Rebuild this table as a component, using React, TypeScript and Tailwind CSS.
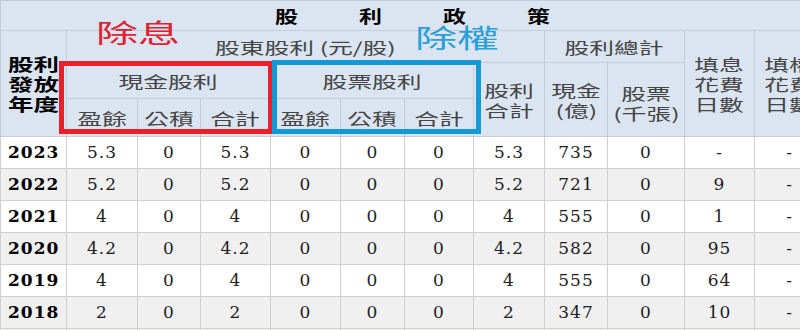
import type { ReactNode } from 'react'

interface DividendRow {
  year: string
  values: string[]
  bg: string
}

const rows: DividendRow[] = [
  { year: '2023', values: ['5.3', '0', '5.3', '0', '0', '0', '5.3', '735', '0', '-', '-'], bg: 'bg-white' },
  { year: '2022', values: ['5.2', '0', '5.2', '0', '0', '0', '5.2', '721', '0', '9', '-'], bg: 'bg-[#f0f0f0]' },
  { year: '2021', values: ['4', '0', '4', '0', '0', '0', '4', '555', '0', '1', '-'], bg: 'bg-white' },
  { year: '2020', values: ['4.2', '0', '4.2', '0', '0', '0', '4.2', '582', '0', '95', '-'], bg: 'bg-[#f0f0f0]' },
  { year: '2019', values: ['4', '0', '4', '0', '0', '0', '4', '555', '0', '64', '-'], bg: 'bg-white' },
  { year: '2018', values: ['2', '0', '2', '0', '0', '0', '2', '347', '0', '10', '-'], bg: 'bg-[#f0f0f0]' },
  { year: '', values: ['', '', '', '', '', '', '', '', '', '', ''], bg: 'bg-[#fcf4dc]' },
]

const colWidths = [66, 71, 63, 70, 70, 64, 69, 71, 63, 77, 70, 70]

const th = 'border border-[#c4ccd6] bg-[#dbe5f1] p-0 font-normal text-[#444444] text-[16px] leading-[20px] text-center align-middle'
const td = 'border border-[#cfcfcf] p-0 text-center align-middle text-[17px] tracking-[1px] text-[#1e1e1e]'

// text in the shot is stretched sideways, so widen the glyphs
function Wide({ children }: { children: ReactNode }) {
  return <span className="inline-block scale-x-[1.55] whitespace-nowrap">{children}</span>
}

function Lines({ lines }: { lines: string[] }) {
  return (
    <div className="flex flex-col items-center">
      {lines.map((l) => (
        <Wide key={l}>{l}</Wide>
      ))}
    </div>
  )
}

export default function App() {
  return (
    <div
      className="relative w-[800px] h-[330px] overflow-hidden bg-white"
      style={{ fontFamily: '"Noto Sans CJK TC", "Noto Sans", sans-serif' }}
    >
      <table className="table-fixed border-collapse w-[824px]">
        <colgroup>
          {colWidths.map((w, i) => (
            <col key={i} style={{ width: w }} />
          ))}
        </colgroup>
        <thead>
          <tr className="h-[30px]">
            <th colSpan={12} className={th}>
              <div className="flex justify-center gap-[67px] text-[17px] font-bold text-black">
                {['股', '利', '政', '策'].map((c) => (
                  <span key={c} className="inline-block scale-x-[1.35]">
                    {c}
                  </span>
                ))}
              </div>
            </th>
          </tr>
          <tr className="h-[32px]">
            <th rowSpan={3} className={th}>
              <div className="flex flex-col items-start pl-[7px] text-[17px] font-bold text-black leading-[20px]">
                {['股利', '發放', '年度'].map((l) => (
                  <span key={l} className="inline-block origin-left scale-x-[1.5]">
                    {l}
                  </span>
                ))}
              </div>
            </th>
            <th colSpan={7} className={th}>
              <Wide>股東股利 (元/股)</Wide>
            </th>
            <th colSpan={2} className={th}>
              <Wide>股利總計</Wide>
            </th>
            <th rowSpan={3} className={th}>
              <Lines lines={['填息', '花費', '日數']} />
            </th>
            <th rowSpan={3} className={th}>
              <Lines lines={['填權', '花費', '日數']} />
            </th>
          </tr>
          <tr className="h-[36px]">
            <th colSpan={3} className={th}>
              <Wide>現金股利</Wide>
            </th>
            <th colSpan={3} className={th}>
              <Wide>股票股利</Wide>
            </th>
            <th rowSpan={2} className={th}>
              <Lines lines={['股利', '合計']} />
            </th>
            <th rowSpan={2} className={th}>
              <Lines lines={['現金', '(億)']} />
            </th>
            <th rowSpan={2} className={th}>
              <div className="pt-[6px]">
                <Lines lines={['股票', '(千張)']} />
              </div>
            </th>
          </tr>
          <tr className="h-[38px]">
            {['盈餘', '公積', '合計', '盈餘', '公積', '合計'].map((t, i) => (
              <th key={i} className={th}>
                <Wide>{t}</Wide>
              </th>
            ))}
          </tr>
        </thead>
        <tbody style={{ fontFamily: '"DejaVu Serif", serif' }}>
          {rows.map((r, idx) => (
            <tr key={idx} className={`h-[32px] ${r.bg}`}>
              <td className={`${td} text-left pl-[7px] font-bold text-black`}>{r.year}</td>
              {r.values.map((v, i) => (
                <td key={i} className={td}>
                  {v}
                </td>
              ))}
            </tr>
          ))}
        </tbody>
      </table>

      {/* annotations drawn over the table */}
      <div className="absolute left-[59px] top-[61px] w-[214px] h-[73px] border-[5px] border-[#e8202a]" />
      <div className="absolute left-[272px] top-[60px] w-[209px] h-[74px] border-[5px] border-[#1399d6]" />
      <span className="absolute left-[96px] top-[18px] text-[26px] leading-[28px] text-[#dc2430] inline-block origin-left scale-x-[1.62]">
        除息
      </span>
      <span className="absolute left-[415px] top-[23px] text-[26px] leading-[28px] text-[#2a9fd8] inline-block origin-left scale-x-[1.62]">
        除權
      </span>
    </div>
  )
}
